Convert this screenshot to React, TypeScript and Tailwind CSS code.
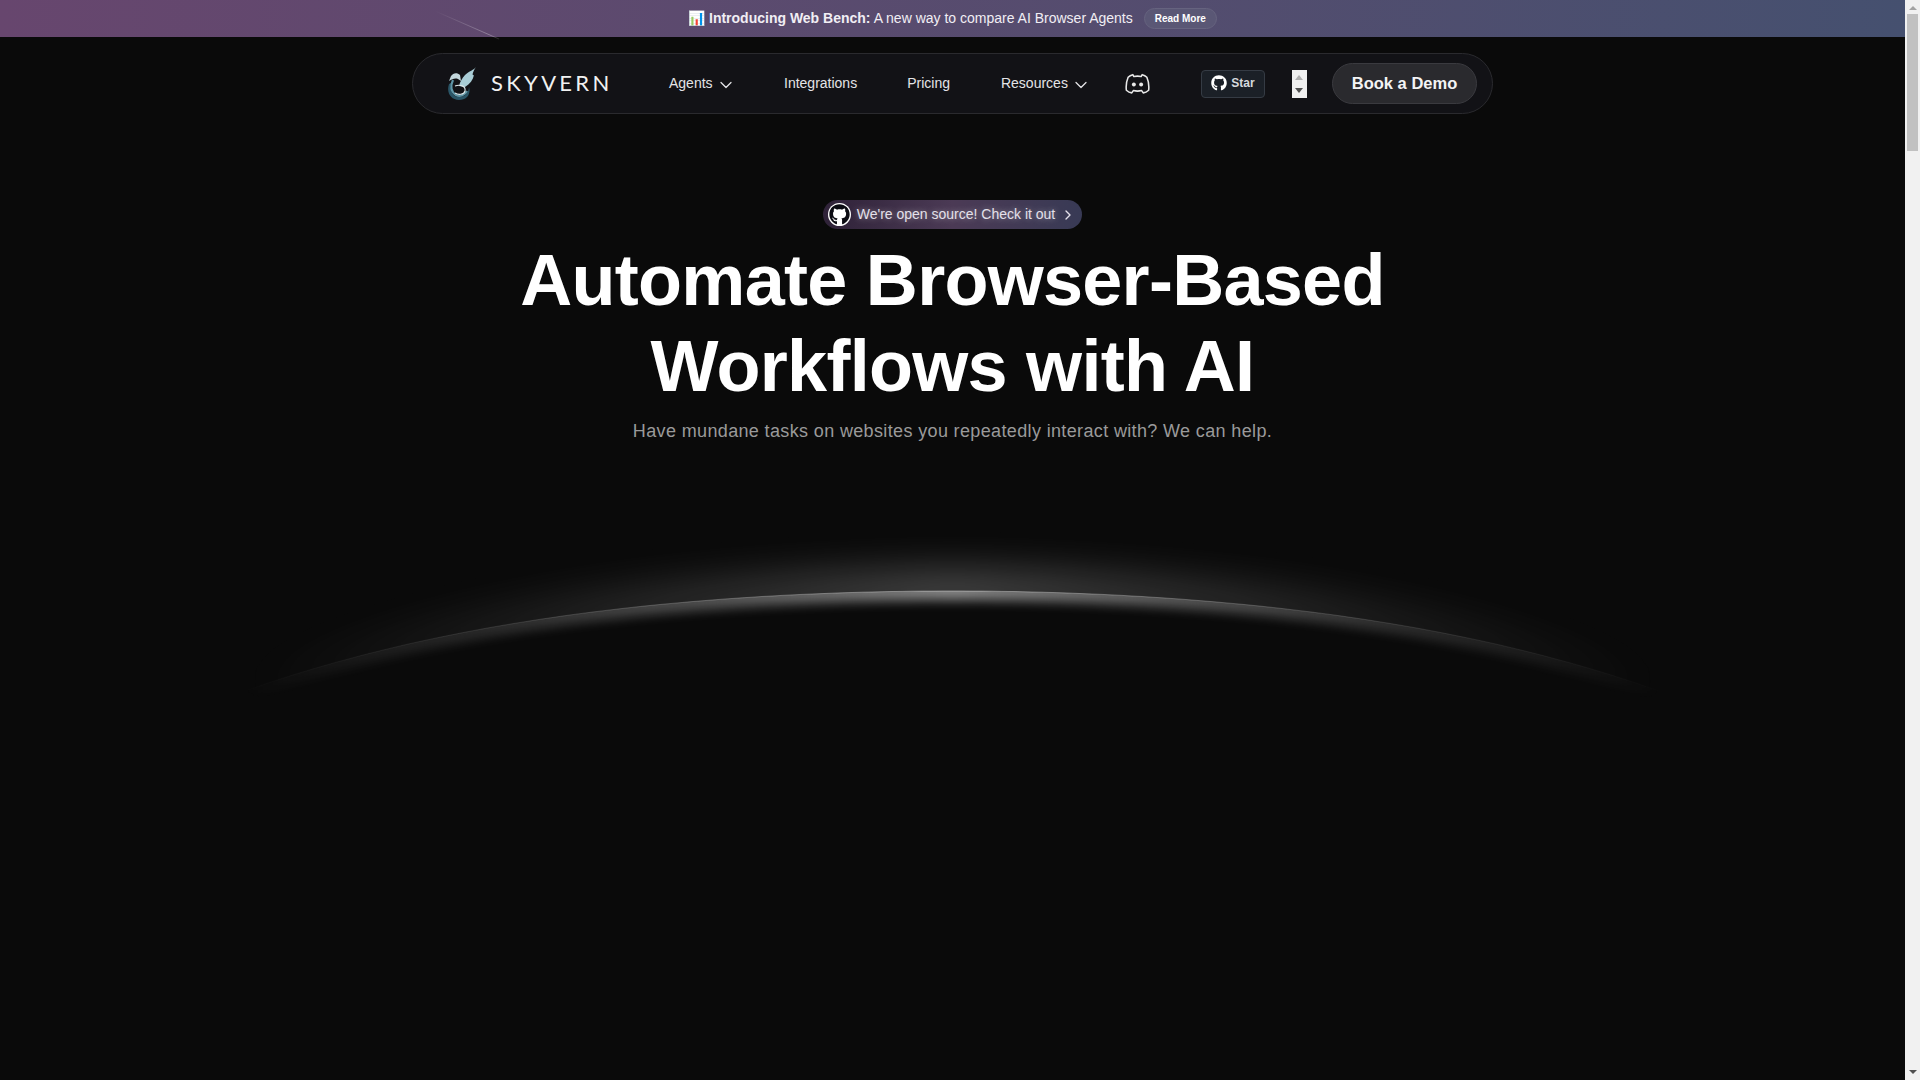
import { ChevronDown, ChevronRight } from "lucide-react";
import { FaGithub } from "react-icons/fa";

// curve of the horizon, sampled from the centre outwards
const CX = 952;
const TOP = 592;
const xs = Array.from({ length: 147 }, (_, i) => -730 + i * 10);
const pts = xs.map((dx) => `${CX + dx} ${(TOP + 0.00015 * dx * dx + 1e-10 * dx ** 4).toFixed(1)}`);
const arc = "M" + pts.join(" L");
const aboveClip = `M${CX - 730} 480 H${CX + 730} L` + [...pts].reverse().join(" L") + " Z";
const belowClip = arc + ` V780 H${CX - 730} Z`;

function DragonLogo() {
  return (
    <svg width="30" height="33" viewBox="0 0 30 33" fill="none">
      <path d="M29 0 C27 3 22 4 18 8 C15 11 13 15 12 19 L18 20 C23 17 26 13 27 8 C25 9 25 6 29 0 Z" fill="#a9cdd6" />
      <path d="M4 9 C6 6 10 5 13 8 L14 14 L11 12 C8 11 5 12 2 14 Z" fill="#c4d8dd" />
      <path d="M2 17 C-1 26 4 33 12 33 C20 33 24 27 22 20 C22 25 18 30 12 30 C6 30 3 24 4 16 Z" fill="#2a5567" />
      <path d="M6 13 C3 19 4 25 9 28 C13 30 18 28 20 24" stroke="#5f95a6" strokeWidth="2.2" />
      <path d="M8 19 C13 17 19 19 18 24 C17 28 11 28 8 26" stroke="#dfe9ec" strokeWidth="1.1" />
    </svg>
  );
}

function DiscordOutline() {
  return (
    <svg width="25" height="25" viewBox="0 0 24 24" fill="none" stroke="#e8e8e8" strokeWidth="1.5" strokeLinejoin="round">
      <path d="M7.5 3.5 C5.5 4 4 5 3 6 C1.5 9.5 0.8 14 1.3 18.5 C3 20 5 20.8 6.5 21 L8 18.8 C10 19.3 14 19.3 16 18.8 L17.5 21 C19 20.8 21 20 22.7 18.5 C23.2 14 22.5 9.5 21 6 C20 5 18.5 4 16.5 3.5 L15.5 5.3 C14 5 10 5 8.5 5.3 Z" />
      <circle cx="8.5" cy="13" r="1.9" fill="#e8e8e8" stroke="none" />
      <circle cx="15.5" cy="13" r="1.9" fill="#e8e8e8" stroke="none" />
    </svg>
  );
}

function NavLink({ label, chevron }: { label: string; chevron?: boolean }) {
  return (
    <a className="flex items-center gap-[3px] pb-0.5 text-sm text-[#e4e4e7]">
      {label}
      {chevron && <ChevronDown size={20} strokeWidth={1.5} className="mt-1" />}
    </a>
  );
}

function Navbar() {
  return (
    <nav className="mx-auto mt-4 flex h-[61px] w-[1081px] items-center rounded-full border border-[#2a2a2e] bg-[#121216] pl-[34px] pr-[15px]">
      <div className="flex w-[175px] items-center gap-[14px]">
        <DragonLogo />
        <span className="pb-0.5 font-['Lato'] text-[22px] tracking-[0.15em] text-[#f1f1f1]">SKYVERN</span>
      </div>
      <div className="ml-[47px] w-[75px]">
        <NavLink label="Agents" chevron />
      </div>
      <div className="ml-[40px]">
        <NavLink label="Integrations" />
      </div>
      <div className="ml-[50px]">
        <NavLink label="Pricing" />
      </div>
      <div className="ml-[51px]">
        <NavLink label="Resources" chevron />
      </div>
      <div className="ml-[34px]">
        <DiscordOutline />
      </div>
      <a className="ml-[51px] flex h-[28px] w-[64px] items-center justify-center gap-1 rounded border border-[#353b44] bg-[#1b2027] pb-px text-xs font-semibold text-[#d6d9dd]">
        <FaGithub className="text-base text-white" />
        Star
      </a>
      <div className="ml-[27px] flex h-[28px] w-[15px] flex-col items-center justify-between bg-[#f0f0f0] py-[5px]">
        <div className="h-0 w-0 border-x-[4px] border-b-[5px] border-x-transparent border-b-[#b0b0b0]" />
        <div className="h-0 w-0 border-x-[4px] border-t-[5px] border-x-transparent border-t-[#505050]" />
      </div>
      <a className="ml-auto flex h-[41px] w-[145px] items-center justify-center rounded-full border border-[#3a3a3f] bg-[#2a2a2e] text-[16.5px] font-bold text-[#f4f4f5]">
        Book a Demo
      </a>
    </nav>
  );
}

function HorizonArc() {
  return (
    <svg width="1905" height="300" viewBox="0 480 1905 300" className="mt-[34px] block">
      <defs>
        <linearGradient id="fade" x1="240" x2="1665" y1="0" y2="0" gradientUnits="userSpaceOnUse">
          <stop offset="0" stopColor="#fff" stopOpacity="0" />
          <stop offset="0.2" stopColor="#fff" stopOpacity="0.22" />
          <stop offset="0.35" stopColor="#fff" stopOpacity="0.44" />
          <stop offset="0.5" stopColor="#fff" stopOpacity="0.7" />
          <stop offset="0.65" stopColor="#fff" stopOpacity="0.44" />
          <stop offset="0.8" stopColor="#fff" stopOpacity="0.22" />
          <stop offset="1" stopColor="#fff" stopOpacity="0" />
        </linearGradient>
        <filter id="glow" x="-20%" y="-200%" width="140%" height="500%">
          <feGaussianBlur stdDeviation="22" />
        </filter>
        <filter id="band" x="-20%" y="-200%" width="140%" height="500%">
          <feGaussianBlur stdDeviation="6" />
        </filter>
        <clipPath id="above">
          <path d={aboveClip} />
        </clipPath>
        <clipPath id="below">
          <path d={belowClip} />
        </clipPath>
      </defs>
      <g clipPath="url(#above)">
        <path d={arc} stroke="url(#fade)" strokeWidth="26" fill="none" filter="url(#glow)" opacity="0.6" />
      </g>
      <g clipPath="url(#below)">
        <path d={arc} stroke="url(#fade)" strokeWidth="18" fill="none" filter="url(#band)" opacity="0.75" />
      </g>
      <path d={arc} stroke="url(#fade)" strokeWidth="1" fill="none" opacity="0.55" />
    </svg>
  );
}

function Scrollbar() {
  return (
    <aside className="flex w-[15px] shrink-0 flex-col items-center bg-[#f1f1f1]">
      <div className="mt-[6px] h-0 w-0 border-x-[4px] border-b-[4px] border-x-transparent border-b-[#a3a3a3]" />
      <div className="mt-[4px] h-[137px] w-[11px] bg-[#c1c1c1]" />
      <div className="mb-[6px] mt-auto h-0 w-0 border-x-[4px] border-t-[4px] border-x-transparent border-t-[#505050]" />
    </aside>
  );
}

export default function App() {
  return (
    <div className="flex h-screen overflow-hidden bg-[#0a0a0a] font-['Liberation_Sans',Arial,sans-serif] text-white">
      <main className="relative min-w-0 flex-1">
        <div className="flex h-[37px] items-center justify-center gap-[11px] bg-gradient-to-r from-[#67466e] to-[#45506f] text-sm text-[#f1eef4]">
          <span className="pb-px">
            <span className="font-bold">📊 Introducing Web Bench:</span> A new way to compare AI Browser Agents
          </span>
          <a className="flex h-[21px] items-center rounded-full border border-[#66637f] bg-[#5a5775] px-[10px] pt-px text-[10px] font-bold text-white">
            Read More
          </a>
        </div>

        {/* shooting star over the banner */}
        <svg width="80" height="40" viewBox="0 0 80 40" className="pointer-events-none absolute left-[425px] top-[3px]">
          <defs>
            <linearGradient id="meteor" x1="10" y1="8" x2="74" y2="36" gradientUnits="userSpaceOnUse">
              <stop offset="0" stopColor="#fff" stopOpacity="0" />
              <stop offset="0.85" stopColor="#fff" stopOpacity="0.3" />
              <stop offset="1" stopColor="#fff" stopOpacity="0.12" />
            </linearGradient>
          </defs>
          <line x1="10" y1="8" x2="74" y2="36" stroke="url(#meteor)" strokeWidth="1" />
        </svg>

        <Navbar />

        <section className="flex flex-col items-center pt-[86px]">
          <a className="flex h-[29px] items-center rounded-full bg-gradient-to-r from-[#2f2238] via-[#4b3a55] to-[#383a55] pl-[5px] pr-[6px] text-sm text-[#e4e0ea]">
            <span className="flex h-[23px] w-[23px] items-center justify-center rounded-full bg-white">
              <FaGithub className="text-[21px] text-[#0b0b12]" />
            </span>
            <span className="ml-[6px] pb-px [text-shadow:0_0_6px_rgba(255,255,255,0.45)]">We're open source! Check it out</span>
            <ChevronRight size={16} className="ml-[5px]" />
          </a>
          <h1 className="mt-2 text-center text-[72px] font-bold leading-[86.4px] tracking-[-0.01em] text-white">
            Automate Browser-Based
            <br />
            Workflows with AI
          </h1>
          <p className="mt-[7px] text-lg tracking-[0.02em] text-[#9a9a9a]">
            Have mundane tasks on websites you repeatedly interact with? We can help.
          </p>
        </section>

        <HorizonArc />
      </main>
      <Scrollbar />
    </div>
  );
}
